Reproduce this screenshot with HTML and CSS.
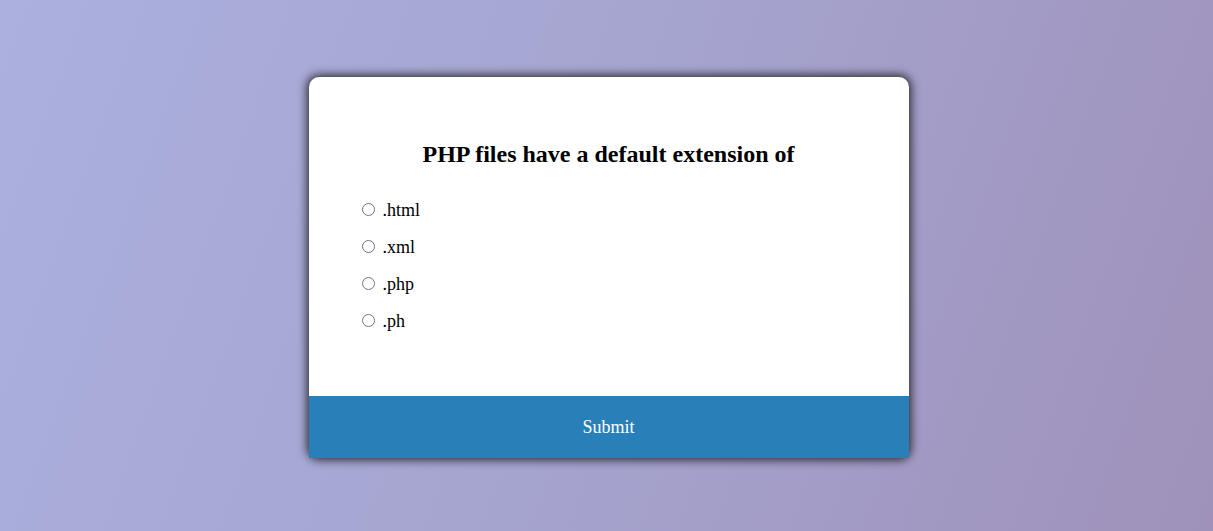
FILE: index.html
```html
<!DOCTYPE html>
<html lang="en">
<head>
<meta charset="UTF-8">
<title>Quiz</title>
<link rel="stylesheet" href="styles.css">
</head>
<body>
<div class="quiz-container">
  <div class="quiz-header">
    <h2 class="question">PHP files have a default extension of</h2>
    <ul class="answers">
      <li><input type="radio" name="answer" id="a"><label for="a">.html</label></li>
      <li><input type="radio" name="answer" id="b"><label for="b">.xml</label></li>
      <li><input type="radio" name="answer" id="c"><label for="c">.php</label></li>
      <li><input type="radio" name="answer" id="d"><label for="d">.ph</label></li>
    </ul>
  </div>
  <button class="submit">Submit</button>
</div>
</body>
</html>
```
FILE: styles.css
```css
* { box-sizing: border-box; }
html, body { height: 100%; }
body {
  margin: 0;
  padding: 4px 0 0 4px;
  font-family: "Liberation Serif", "Times New Roman", serif;
  background: linear-gradient(110deg, #abb0de 0%, #a5a4cf 50%, #9f91ba 100%);
  display: flex;
  align-items: center;
  justify-content: center;
  overflow: hidden;
}
.quiz-container {
  background: #fff;
  width: 600px;
  border-radius: 10px;
  box-shadow: 0 0 10px 2px rgba(0, 0, 0, 0.75);
}
.quiz-header { padding: 3rem; }
.question {
  margin: 0;
  padding: 1rem 0;
  font-size: 24px;
  text-align: center;
}
.answers {
  list-style: none;
  margin: 0;
  padding: 0;
}
.answers li {
  font-size: 18px;
  margin: 1rem 0;
}
.answers input { margin: 3px 3px 0 5px; }
.answers label { margin-left: 5px; }
.submit {
  display: block;
  width: 100%;
  border: none;
  background: #2980b9;
  color: #fff;
  font-family: inherit;
  font-size: 18px;
  padding: 20.5px;
  cursor: pointer;
}
```
